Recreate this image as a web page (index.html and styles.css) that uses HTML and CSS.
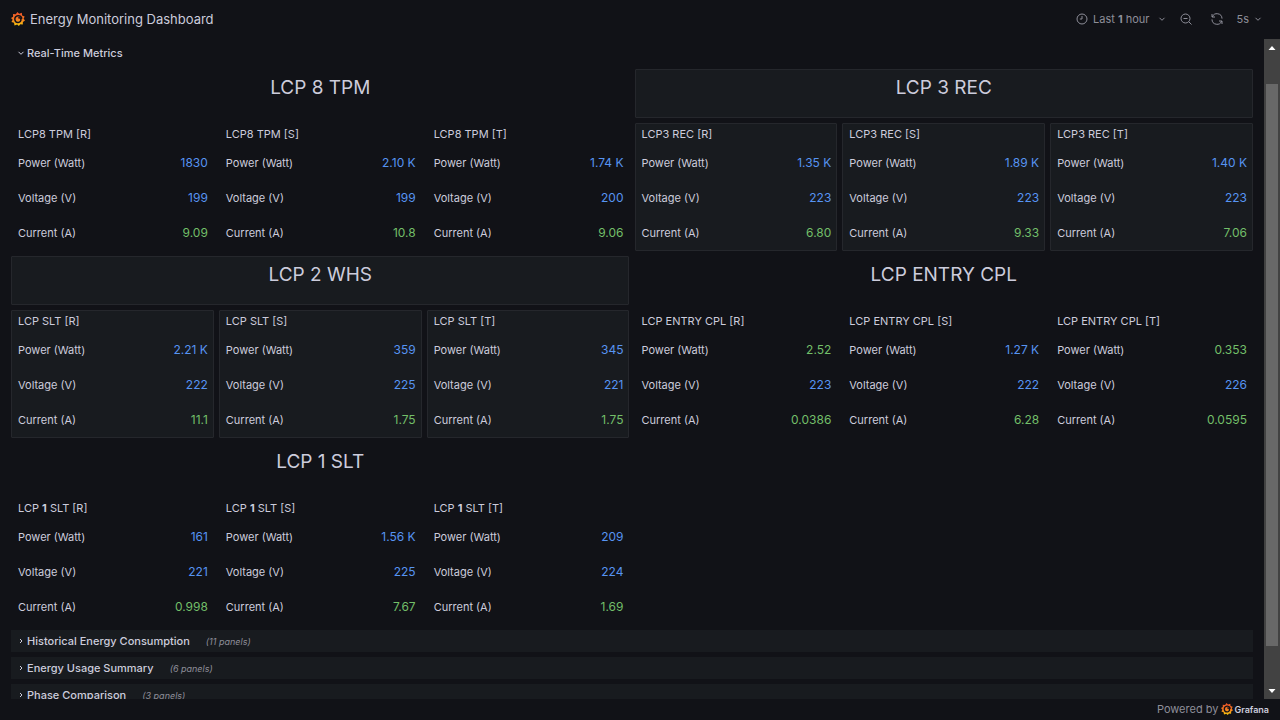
FILE: index.html
```html
<!DOCTYPE html>
<html lang="en">
<head>
<meta charset="utf-8">
<meta name="viewport" content="width=device-width, initial-scale=1">
<title>Energy Monitoring Dashboard</title>
<link rel="stylesheet" href="styles.css">
</head>
<body>
<svg class="defs" aria-hidden="true">
  <defs>
    <linearGradient id="flame" x1="0" y1="0" x2="0" y2="1">
      <stop offset="0" stop-color="#f0502a"/><stop offset="0.55" stop-color="#f47b20"/><stop offset="1" stop-color="#fcd20b"/>
    </linearGradient>
    <symbol id="logo" viewBox="0 0 24 24">
      <path fill="url(#flame)" d="M11 0l3 3.200 4.600-1.800.4 4.600 4.400 1.600-1.800 3.800 2.400 3.200-3.600 2.400-.2 4.400-4.400-.2-2.200 2.800-3-2.400-4.600 1.400-.8-4.400-4.400-1.600 2-3.600L0 10.200l3.600-2.200L3.400 3.600l4.800.2z"/>
      <path fill="none" stroke="#111217" stroke-width="2.600" stroke-linecap="round" d="M18.500 10.500c-1-3-3.500-4.500-6.500-4.100-3.600.5-5.600 3.400-5.400 6.400.3 3.400 3 5.200 5.800 5 3-.2 4.800-2.400 4.600-4.800-.2-2-1.800-3.200-3.400-3"/>
    </symbol>
    <symbol id="down" viewBox="0 0 8 8"><path d="M1.500 2.800L4 5.300l2.500-2.500"/></symbol>
    <symbol id="right" viewBox="0 0 8 8"><path d="M3 2L5 4 3 6"/></symbol>
  </defs>
</svg>
<div class="app">
  <header class="topbar">
    <svg class="logo"><use href="#logo"/></svg>
    <h1 class="topbar-title">Energy Monitoring Dashboard</h1>
    <div class="tools">
      <button class="tool range" type="button">
        <svg class="icon" viewBox="0 0 12 12"><circle cx="6" cy="6" r="5"/><path d="M6 3v3H3.800"/></svg>
        <span>Last <b>1</b> hour</span>
        <svg class="chevron"><use href="#down"/></svg>
      </button>
      <button class="tool zoom-out" type="button" aria-label="Zoom out time range">
        <svg class="icon" viewBox="0 0 12 12"><circle cx="5.500" cy="5.500" r="4.500"/><path d="M3.500 5.500h4M8.800 8.800l2.700 2.700"/></svg>
      </button>
      <button class="tool" type="button" aria-label="Refresh dashboard">
        <svg class="icon" viewBox="0 0 12 12"><path d="M1 1v3h3M1.300 4A5 5 0 0 1 11 5.600M11 11V8H8M10.700 8A5 5 0 0 1 1 6.400"/></svg>
      </button>
      <button class="tool interval" type="button">5s <svg class="chevron"><use href="#down"/></svg></button>
    </div>
  </header>

  <div class="viewport">
    <main class="board">
      <button class="row-toggle open" type="button" aria-expanded="true"><svg class="chevron"><use href="#down"/></svg>Real-Time Metrics</button>

      <div class="groups">
        <section class="group">
          <h2 class="panel group-title">LCP 8 TPM</h2>
          <article class="panel"><h3>LCP8 TPM [R]</h3><dl><div><dt>Power (Watt)</dt><dd>1830</dd></div><div><dt>Voltage (V)</dt><dd>199</dd></div><div><dt>Current (A)</dt><dd class="ok">9.09</dd></div></dl></article>
          <article class="panel"><h3>LCP8 TPM [S]</h3><dl><div><dt>Power (Watt)</dt><dd>2.10 K</dd></div><div><dt>Voltage (V)</dt><dd>199</dd></div><div><dt>Current (A)</dt><dd class="ok">10.8</dd></div></dl></article>
          <article class="panel"><h3>LCP8 TPM [T]</h3><dl><div><dt>Power (Watt)</dt><dd>1.74 K</dd></div><div><dt>Voltage (V)</dt><dd>200</dd></div><div><dt>Current (A)</dt><dd class="ok">9.06</dd></div></dl></article>
        </section>
        <section class="group filled">
          <h2 class="panel group-title">LCP 3 REC</h2>
          <article class="panel"><h3>LCP3 REC [R]</h3><dl><div><dt>Power (Watt)</dt><dd>1.35 K</dd></div><div><dt>Voltage (V)</dt><dd>223</dd></div><div><dt>Current (A)</dt><dd class="ok">6.80</dd></div></dl></article>
          <article class="panel"><h3>LCP3 REC [S]</h3><dl><div><dt>Power (Watt)</dt><dd>1.89 K</dd></div><div><dt>Voltage (V)</dt><dd>223</dd></div><div><dt>Current (A)</dt><dd class="ok">9.33</dd></div></dl></article>
          <article class="panel"><h3>LCP3 REC [T]</h3><dl><div><dt>Power (Watt)</dt><dd>1.40 K</dd></div><div><dt>Voltage (V)</dt><dd>223</dd></div><div><dt>Current (A)</dt><dd class="ok">7.06</dd></div></dl></article>
        </section>
        <section class="group filled">
          <h2 class="panel group-title">LCP 2 WHS</h2>
          <article class="panel"><h3>LCP SLT [R]</h3><dl><div><dt>Power (Watt)</dt><dd>2.21 K</dd></div><div><dt>Voltage (V)</dt><dd>222</dd></div><div><dt>Current (A)</dt><dd class="ok">11.1</dd></div></dl></article>
          <article class="panel"><h3>LCP SLT [S]</h3><dl><div><dt>Power (Watt)</dt><dd>359</dd></div><div><dt>Voltage (V)</dt><dd>225</dd></div><div><dt>Current (A)</dt><dd class="ok">1.75</dd></div></dl></article>
          <article class="panel"><h3>LCP SLT [T]</h3><dl><div><dt>Power (Watt)</dt><dd>345</dd></div><div><dt>Voltage (V)</dt><dd>221</dd></div><div><dt>Current (A)</dt><dd class="ok">1.75</dd></div></dl></article>
        </section>
        <section class="group">
          <h2 class="panel group-title">LCP ENTRY CPL</h2>
          <article class="panel"><h3>LCP ENTRY CPL [R]</h3><dl><div><dt>Power (Watt)</dt><dd class="ok">2.52</dd></div><div><dt>Voltage (V)</dt><dd>223</dd></div><div><dt>Current (A)</dt><dd class="ok">0.0386</dd></div></dl></article>
          <article class="panel"><h3>LCP ENTRY CPL [S]</h3><dl><div><dt>Power (Watt)</dt><dd>1.27 K</dd></div><div><dt>Voltage (V)</dt><dd>222</dd></div><div><dt>Current (A)</dt><dd class="ok">6.28</dd></div></dl></article>
          <article class="panel"><h3>LCP ENTRY CPL [T]</h3><dl><div><dt>Power (Watt)</dt><dd class="ok">0.353</dd></div><div><dt>Voltage (V)</dt><dd>226</dd></div><div><dt>Current (A)</dt><dd class="ok">0.0595</dd></div></dl></article>
        </section>
        <section class="group">
          <h2 class="panel group-title">LCP 1 SLT</h2>
          <article class="panel"><h3>LCP <b>1</b> SLT [R]</h3><dl><div><dt>Power (Watt)</dt><dd>161</dd></div><div><dt>Voltage (V)</dt><dd>221</dd></div><div><dt>Current (A)</dt><dd class="ok">0.998</dd></div></dl></article>
          <article class="panel"><h3>LCP <b>1</b> SLT [S]</h3><dl><div><dt>Power (Watt)</dt><dd>1.56 K</dd></div><div><dt>Voltage (V)</dt><dd>225</dd></div><div><dt>Current (A)</dt><dd class="ok">7.67</dd></div></dl></article>
          <article class="panel"><h3>LCP <b>1</b> SLT [T]</h3><dl><div><dt>Power (Watt)</dt><dd>209</dd></div><div><dt>Voltage (V)</dt><dd>224</dd></div><div><dt>Current (A)</dt><dd class="ok">1.69</dd></div></dl></article>
        </section>
      </div>

      <button class="row-toggle" type="button" aria-expanded="false"><svg class="chevron"><use href="#right"/></svg>Historical Energy Consumption<em>(11 panels)</em></button>
      <button class="row-toggle" type="button" aria-expanded="false"><svg class="chevron"><use href="#right"/></svg>Energy Usage Summary<em>(6 panels)</em></button>
      <button class="row-toggle" type="button" aria-expanded="false"><svg class="chevron"><use href="#right"/></svg>Phase Comparison<em>(3 panels)</em></button>
    </main>
    <div class="scrollbar" aria-hidden="true">
      <svg class="arrow" viewBox="0 0 16 16"><path d="M4.500 11L8 7l3.500 4z"/></svg>
      <div class="track"><div class="thumb"></div></div>
      <svg class="arrow" viewBox="0 0 16 16"><path d="M4.500 6L8 10l3.500-4z"/></svg>
    </div>
  </div>

  <footer class="footer">
    <span>Powered by</span>
    <a class="brand" href="#"><svg class="brand-logo"><use href="#logo"/></svg>Grafana</a>
  </footer>
</div>
</body>
</html>
```
FILE: styles.css
```css
* { box-sizing: border-box; }

body {
  margin: 0;
  background: #111217;
  color: #ccccdc;
  font-family: Inter, "Liberation Sans", sans-serif;
  font-size: 12px;
}

h1, h2, h3, dl, dd { margin: 0; font-weight: 400; }
button { border: 0; padding: 0; background: none; color: inherit; font: inherit; cursor: pointer; }
.defs { position: absolute; width: 0; height: 0; }

.app { display: flex; flex-direction: column; height: 100vh; }

.topbar { display: flex; align-items: center; flex: none; height: 39px; padding: 0 18px 1px 11px; }
.logo { width: 14px; height: 14px; margin-right: 5px; }
.topbar-title { font-size: 13px; line-height: 20px; }
.tools { display: flex; align-items: center; gap: 14px; margin-left: auto; color: #8e8e99; font-size: 11px; }
.tool { display: flex; align-items: center; gap: 5px; }
.zoom-out { margin-right: 5px; }
.range .chevron { margin-left: 3px; }
.icon { width: 12px; height: 12px; fill: none; stroke: currentColor; stroke-width: 1; }
.chevron { flex: none; width: 8px; height: 8px; fill: none; stroke: currentColor; stroke-width: 1; }

.viewport { display: flex; flex: 1; min-height: 0; }
.board { display: flex; flex: 1; flex-direction: column; gap: 5px; min-width: 0; padding: 3px 11px 0; overflow: hidden; }

.row-toggle { display: flex; align-items: center; flex: none; height: 22px; padding: 0 0 1px 6px; background: #181b1f; font-size: 11px; font-weight: 500; }
.row-toggle .chevron { margin-right: 2px; }
.row-toggle em { margin-left: 16px; padding-top: 1px; color: #8e8e99; font-size: 9px; font-weight: 400; }
.row-toggle.open { background: none; }

.groups { display: grid; grid-template-columns: 1fr 1fr; gap: 5px; flex: none; }
.group { display: grid; grid-template-columns: repeat(3, 1fr); gap: 5px; }
.panel { border: 1px solid transparent; border-radius: 1px; }
.filled .panel { border-color: #25272c; background: #181b1f; }
.group-title { grid-column: 1 / -1; height: 49px; padding-top: 6px; font-size: 19px; line-height: 24px; text-align: center; }
.panel h3 { padding: 0 6px; font-size: 11px; line-height: 21px; }
.panel dl div { display: flex; align-items: center; justify-content: space-between; height: 35px; padding: 0 5px 0 6px; }
.panel dt { font-size: 11px; }
.panel dd { color: #5794f2; }
.panel dd.ok { color: #73bf69; }

.scrollbar { display: flex; flex: none; flex-direction: column; width: 16px; background: #424242; }
.arrow { flex: none; width: 16px; height: 16px; fill: #fff; }
.track { display: flex; flex: 1; flex-direction: column; padding: 29px 2px 37px; }
.thumb { flex: 1; background: #686868; }

.footer { display: flex; align-items: center; justify-content: flex-end; flex: none; gap: 3px; height: 21px; padding: 0 11px 1px 0; color: #8e8e99; font-size: 11px; }
.brand { display: flex; align-items: center; gap: 1px; color: #ccccdc; font-size: 9px; font-weight: 600; text-decoration: none; }
.brand-logo { width: 12px; height: 12px; }
```
